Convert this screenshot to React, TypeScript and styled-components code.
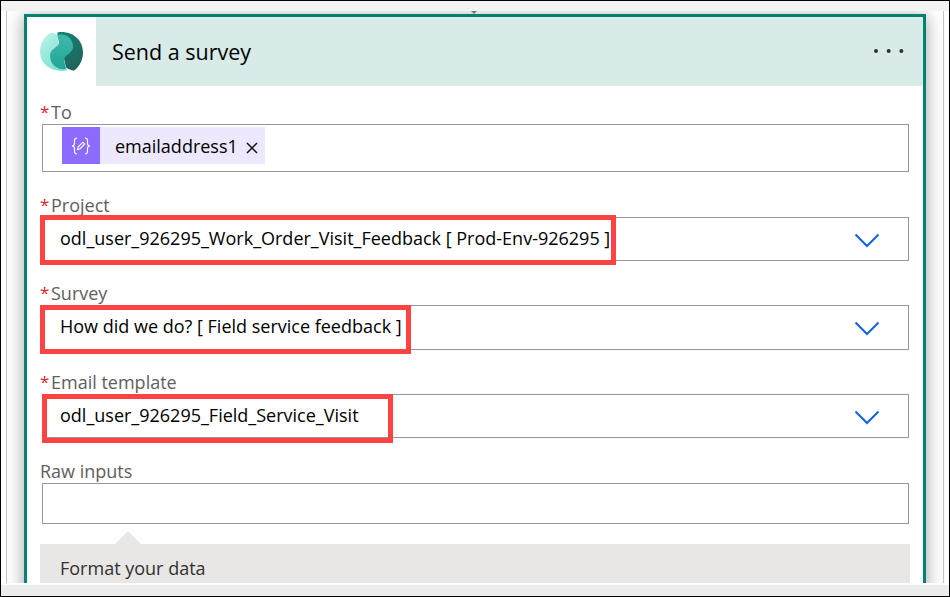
import React from "react";
import styled, { createGlobalStyle } from "styled-components";

const GlobalStyle = createGlobalStyle`
  * { box-sizing: border-box; }
  body { margin: 0; background: #fff; font-family: "Open Sans", "Noto Sans", sans-serif; }
`;

const Frame = styled.div`
  width: 950px;
  height: 597px;
  border: 1px solid #000;
  display: flex;
  flex-direction: column;
  overflow: hidden;
  background: #fff;
`;

const TopStrip = styled.div`
  flex: 0 0 10px;
  background: #f3f3f3;
`;

const Canvas = styled.div`
  position: relative;
  flex: 0 0 572px;
  margin: 0 5px;
  border: solid #c3c3c3;
  border-width: 0 1px;
  padding: 3px 17px 0;
  overflow: hidden;
`;

const BottomStrip = styled.div`
  flex: 0 0 11px;
  margin-top: 2px;
  background: #ededed;
`;

const ArrowTip = styled.svg`
  position: absolute;
  left: 464px;
  top: 0;
  display: block;
`;

const Card = styled.section`
  height: 640px;
  background: #fff;
  border: 3px solid #008272;
  box-shadow: 0 3px 16px 1px rgba(0, 0, 0, 0.34);
`;

const Header = styled.header`
  display: flex;
  height: 69px;
`;

const LogoCell = styled.div`
  width: 69px;
  padding: 14px 0 0 12px;
`;

const Heading = styled.div`
  flex: 1;
  display: flex;
  justify-content: space-between;
  padding: 0 18px 0 16px;
  background: #d9ebe8;
`;

const Text = styled.span<{ $size?: number; $track?: number; $color?: string; $line?: number; $weight?: number }>`
  display: block;
  white-space: pre;
  font-size: ${(p) => p.$size ?? 18}px;
  letter-spacing: ${(p) => p.$track ?? 0}px;
  line-height: ${(p) => p.$line ?? 24}px;
  color: ${(p) => p.$color ?? "#000"};
  font-weight: ${(p) => p.$weight ?? 400};
`;

const MoreButton = styled.button`
  display: flex;
  align-items: center;
  padding: 0;
  height: 68px;
  border: 0;
  background: none;
`;

const Body = styled.div`
  display: flex;
  flex-direction: column;
  padding: 14px 13px 0;
`;

const Label = styled.div<{ $gap: number }>`
  display: flex;
  height: 24px;
  margin-top: ${(p) => p.$gap}px;
`;

const Star = styled.span`
  width: 11px;
  font-size: 17px;
  line-height: 24px;
  color: #e0232e;
`;

const Box = styled.div<{ $height: number }>`
  position: relative;
  display: flex;
  align-items: flex-start;
  justify-content: space-between;
  height: ${(p) => p.$height}px;
  margin: 0 1px 0 2px;
  padding: 0 28px 0 17px;
  border: 1px solid #979797;
`;

const Value = styled.div`
  padding-top: 8px;
`;

const Chevron = styled.svg`
  display: block;
  margin-top: 15px;
`;

const Highlight = styled.div<{ $x: number; $y: number; $w: number; $h: number }>`
  position: absolute;
  left: ${(p) => p.$x}px;
  top: ${(p) => p.$y}px;
  width: ${(p) => p.$w}px;
  height: ${(p) => p.$h}px;
  border: 5px solid #ff4343;
`;

const Token = styled.div`
  display: flex;
  width: 203px;
  height: 37px;
  margin: 2px 0 0 2px;
  background: #eee8ff;
`;

const TokenIcon = styled.div`
  display: flex;
  align-items: center;
  justify-content: center;
  width: 38px;
  background: #8c6cff;
`;

const TokenName = styled.div`
  width: 131px;
  padding: 7px 0 0 15px;
`;

const CloseIcon = styled.svg`
  margin: 15px 0 0 15px;
`;

const Pointer = styled.svg`
  display: block;
  margin: 7px 0 0 75px;
`;

const FormatPanel = styled.div`
  height: 80px;
  padding: 12px 20px;
  background: #e8e7e5;
`;

type SelectProps = {
  label: string;
  labelTrack: number;
  value: string;
  track: number;
  gap: number;
  height: number;
  mark: [number, number, number, number];
};

const fields: SelectProps[] = [
  { label: "Project", labelTrack: 0, value: "odl_user_926295_Work_Order_Visit_Feedback [ Prod-Env-926295 ]", track: 0, gap: 21, height: 44, mark: [-3, -3, 576, 50] },
  { label: "Survey", labelTrack: 0, value: "How did we do? [ Field service feedback ]", track: 0, gap: 20, height: 45, mark: [-3, -1, 371, 49] },
  { label: "Email template", labelTrack: 0, value: "odl_user_926295_Field_Service_Visit", track: 0, gap: 20, height: 44, mark: [-1, -1, 351, 49] },
];

function SelectField({ label, labelTrack, value, track, gap, height, mark }: SelectProps) {
  return (
    <>
      <Label $gap={gap}>
        <Star>*</Star>
        <Text $track={labelTrack} $color="#605e5c">{label}</Text>
      </Label>
      <Box $height={height}>
        <Value>
          <Text $track={track}>{value}</Text>
        </Value>
        <Chevron width="26" height="16" viewBox="0 0 26 16">
          <path d="M1.5 1.5 13 13 24.5 1.5" fill="none" stroke="#1160e8" strokeWidth="2" />
        </Chevron>
        <Highlight $x={mark[0]} $y={mark[1]} $w={mark[2]} $h={mark[3]} />
      </Box>
    </>
  );
}

export default function App() {
  return (
    <>
      <GlobalStyle />
      <Frame>
        <TopStrip />
        <Canvas>
          <Card>
            <Header>
              <LogoCell>
                <svg width="45" height="42" viewBox="0 0 45 42">
                  <defs>
                    <linearGradient id="pale" x1="0" y1="0" x2="0.6" y2="1">
                      <stop offset="0" stopColor="#b9f3ea" />
                      <stop offset="1" stopColor="#7fe0d3" />
                    </linearGradient>
                    <linearGradient id="mid" x1="0" y1="0" x2="0" y2="1">
                      <stop offset="0" stopColor="#40b9a9" />
                      <stop offset="1" stopColor="#23a595" />
                    </linearGradient>
                    <linearGradient id="deep" x1="0" y1="0" x2="0.5" y2="1">
                      <stop offset="0" stopColor="#128576" />
                      <stop offset="1" stopColor="#20655c" />
                    </linearGradient>
                  </defs>
                  <path d="M10.6 2.4C12 1.3 13.6 1.6 15 2.2C17 3.1 18.6 3.4 18.4 6L19.8 13L28 38L27.6 39.4C14 42 1 34 1 20.500C1 13 4.800 6 10.600 2.400Z" fill="url(#pale)" />
                  <path d="M18.200 2.500C18.200 1 20 1 22.500 1C34.500 1 44 9.500 44 21C44 28.500 41 35 35.800 39C34.500 40 32.500 39.400 31 38.600C28.500 38 27 37 26.800 35L25 28Z" fill="url(#deep)" />
                  <path d="M18.200 4.500C19 3.700 20.500 3.500 22.500 3.500C29 3.500 34 9 34 15.500C34 23 24.500 23.500 25 30L27 37.700C26 38.500 24 38.500 22 38.100C16 37 11 31.500 11 25C11 16.500 20.500 17 20 11Z" fill="url(#mid)" />
                </svg>
              </LogoCell>
              <Heading>
                <Text $size={21.5} $line={70}>Send a survey</Text>
                <MoreButton aria-label="More">
                  <svg width="32" height="6" viewBox="0 0 32 6" fill="#303030">
                    <circle cx="3" cy="3" r="2" />
                    <circle cx="15.700" cy="3" r="2" />
                    <circle cx="28.400" cy="3" r="2" />
                  </svg>
                </MoreButton>
              </Heading>
            </Header>
            <Body>
              <Label $gap={0}>
                <Star>*</Star>
                <Text $color="#605e5c">To</Text>
              </Label>
              <Box $height={48}>
                <Token>
                  <TokenIcon>
                    <svg width="20" height="18" viewBox="0 0 20 18" fill="none" stroke="#fff" strokeWidth="1.100">
                      <path d="M6 1C4 1 3.500 2 3.500 3.500V6.500C3.500 8 2.500 9 1 9C2.500 9 3.500 10 3.500 11.500V14.500C3.500 16 4 17 6 17M14 1C16 1 16.500 2 16.500 3.500V6.500C16.500 8 17.500 9 19 9C17.500 9 16.500 10 16.500 11.500V14.500C16.500 16 16 17 14 17" />
                      <path d="M6.500 12.500 7.300 9.800 12 5.200 13.800 7 9.200 11.700Z" />
                    </svg>
                  </TokenIcon>
                  <TokenName>
                    <Text>emailaddress1</Text>
                  </TokenName>
                  <CloseIcon width="12" height="12" viewBox="0 0 12 12">
                    <path d="M1 1 11 11M11 1 1 11" stroke="#111" strokeWidth="1.500" />
                  </CloseIcon>
                </Token>
              </Box>
              {fields.map((f) => (
                <SelectField key={f.label} {...f} />
              ))}
              <Label $gap={21}>
                <Text $color="#605e5c">Raw inputs</Text>
              </Label>
              <Box $height={41} />
              <Pointer width="26" height="13" viewBox="0 0 26 13">
                <path d="M0 13 13 0 26 13Z" fill="#e8e7e5" />
              </Pointer>
              <FormatPanel>
                <Text $color="#323130">Format your data</Text>
              </FormatPanel>
            </Body>
          </Card>
          <ArrowTip width="6" height="3" viewBox="0 0 6 3">
            <path d="M0 0H6L3 3Z" fill="#777" />
          </ArrowTip>
        </Canvas>
        <BottomStrip />
      </Frame>
    </>
  );
}
